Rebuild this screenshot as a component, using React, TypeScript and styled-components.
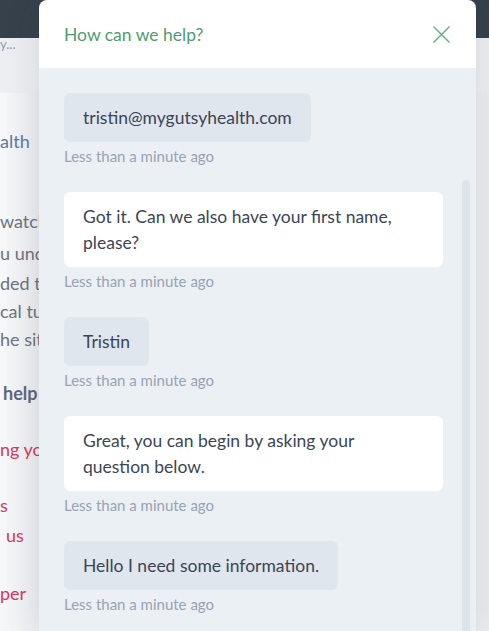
import styled, { createGlobalStyle } from "styled-components";

const GlobalStyle = createGlobalStyle`
  html, body {
    margin: 0;
    padding: 0;
    height: 100%;
    overflow: hidden;
  }
  body {
    font-family: Lato, "Open Sans", "Liberation Sans", sans-serif;
    background: #f3f4f6;
  }
`;

type Tone = "muted" | "link" | "strong" | "alert";

const toneColors: Record<Tone, string> = {
  muted: "#6c7482",
  link: "#5b78a6",
  strong: "#5e6878",
  alert: "#d63a5c",
};

const Page = styled.div`
  display: flex;
  flex-direction: column;
  height: 631px;
  background: #f3f4f6;
`;

const TopBar = styled.div`
  height: 38px;
  flex-shrink: 0;
  background: #36414b;
`;

const SubBar = styled.div`
  height: 55px;
  flex-shrink: 0;
  background: #eceef1;
  font-size: 13px;
  line-height: 12px;
  color: #8a9bb8;
  white-space: nowrap;
`;

const PageBody = styled.div`
  flex: 1;
  display: flex;
  flex-direction: column;
  padding-top: 34px;
  white-space: nowrap;
  background: linear-gradient(90deg, #f7f8f9 0%, #eaecef 40px);
`;

const BgLine = styled.div<{ $tone: Tone; $gap: number; $indent?: number }>`
  font-size: 18px;
  line-height: 28px;
  margin-top: ${(p) => p.$gap}px;
  padding-left: ${(p) => p.$indent ?? 0}px;
  color: ${(p) => toneColors[p.$tone]};
  font-weight: ${(p) => (p.$tone === "strong" ? 700 : 400)};
`;

const Panel = styled.div`
  position: fixed;
  top: 0;
  left: 39px;
  width: 437px;
  bottom: 0;
  display: flex;
  flex-direction: column;
  border-radius: 8px 8px 0 0;
  overflow: hidden;
  box-shadow: 0 0 36px rgba(40, 50, 70, 0.12);
`;

const Header = styled.div`
  height: 68px;
  flex-shrink: 0;
  display: flex;
  align-items: center;
  justify-content: space-between;
  padding: 0 26px 0 25px;
  background: #ffffff;
`;

const Title = styled.h2`
  margin: 0;
  font-size: 17.5px;
  font-weight: 400;
  color: #4f9c72;
`;

const CloseButton = styled.button`
  border: 0;
  padding: 0;
  background: none;
  width: 17px;
  height: 17px;
  display: flex;
  cursor: pointer;
`;

const Messages = styled.div`
  position: relative;
  flex: 1;
  display: flex;
  flex-direction: column;
  align-items: flex-start;
  padding: 25px 33px 0 25px;
  background: #ebf0f5;
`;

const Thumb = styled.div`
  position: absolute;
  top: 112px;
  right: 6px;
  bottom: 0;
  width: 8px;
  border-radius: 4px;
  background: #dde4ec;
`;

const Message = styled.div`
  display: flex;
  flex-direction: column;
  align-items: flex-start;
  max-width: 100%;
  margin-bottom: 26px;
`;

const Bubble = styled.div<{ $fromUser: boolean }>`
  padding: 12px 19px 11px;
  border-radius: 6px;
  font-size: 17.5px;
  line-height: 26px;
  color: #3c4554;
  background: ${(p) => (p.$fromUser ? "#dfe6ee" : "#ffffff")};
`;

const Stamp = styled.div`
  margin-top: 4px;
  font-size: 15px;
  line-height: 20px;
  color: #98a3b7;
`;

const messages = [
  { fromUser: true, text: "tristin@mygutsyhealth.com" },
  { fromUser: false, text: "Got it. Can we also have your first name, please?" },
  { fromUser: true, text: "Tristin" },
  { fromUser: false, text: "Great, you can begin by asking your question below." },
  { fromUser: true, text: "Hello I need some information." },
];

export default function App() {
  return (
    <>
      <GlobalStyle />
      <Page>
        <TopBar />
        <SubBar>y...</SubBar>
        <PageBody>
          <BgLine $tone="link" $gap={0}>alth</BgLine>
          <BgLine $tone="muted" $gap={52}>watching</BgLine>
          <BgLine $tone="muted" $gap={4}>u understand</BgLine>
          <BgLine $tone="muted" $gap={2}>ded to</BgLine>
          <BgLine $tone="muted" $gap={0}>cal tutorials</BgLine>
          <BgLine $tone="muted" $gap={0}>he site</BgLine>
          <BgLine $tone="strong" $gap={26} $indent={3}>help</BgLine>
          <BgLine $tone="alert" $gap={28}>ng your</BgLine>
          <BgLine $tone="alert" $gap={28}>s</BgLine>
          <BgLine $tone="alert" $gap={2} $indent={6}>us</BgLine>
          <BgLine $tone="alert" $gap={30}>per</BgLine>
        </PageBody>
      </Page>
      <Panel>
        <Header>
          <Title>How can we help?</Title>
          <CloseButton aria-label="Close">
            <svg width="17" height="17" viewBox="0 0 17 17">
              <path d="M0.5 0.5 L16.5 16.5 M16.5 0.5 L0.5 16.5" stroke="#5fae85" strokeWidth="1.4" fill="none" />
            </svg>
          </CloseButton>
        </Header>
        <Messages>
          {messages.map((m, i) => (
            <Message key={i}>
              <Bubble $fromUser={m.fromUser}>{m.text}</Bubble>
              <Stamp>Less than a minute ago</Stamp>
            </Message>
          ))}
          <Thumb />
        </Messages>
      </Panel>
    </>
  );
}
